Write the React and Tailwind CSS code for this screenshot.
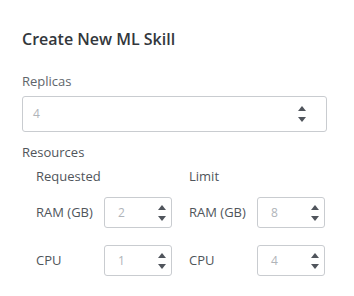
function Spinner() {
  return (
    <div className="flex flex-col items-center gap-[6px]">
      <svg width="8" height="5" viewBox="0 0 8 5">
        <path d="M4 0 L8 5 L0 5 Z" fill="#50555c" />
      </svg>
      <svg width="8" height="5" viewBox="0 0 8 5">
        <path d="M0 0 L8 0 L4 5 Z" fill="#50555c" />
      </svg>
    </div>
  );
}

function NumberBox({ value, className }) {
  return (
    <div
      className={`flex items-center justify-between rounded-[3px] border border-[#c9ccd0] bg-white ${className}`}
    >
      <span className="text-[12px] text-[#b0b4b9]">{value}</span>
      <Spinner />
    </div>
  );
}

function Field({ label, value }) {
  return (
    <div className="flex items-center">
      <span className="w-[68px] text-[13px] text-[#50555b]">{label}</span>
      <NumberBox value={value} className="h-[31px] w-[68px] pl-[13px] pr-[5px]" />
    </div>
  );
}

export default function App() {
  return (
    <div
      className="h-[296px] w-[354px] bg-white pl-[22px] pt-[29px]"
      style={{ fontFamily: '"Open Sans", "Noto Sans", sans-serif' }}
    >
      <h1 className="text-[16px] font-semibold leading-[20px] text-[#33373c]">
        Create New ML Skill
      </h1>
      <div className="mt-[23px] text-[13px] leading-[18px] text-[#60656b]">Replicas</div>
      <NumberBox value="4" className="mt-[6px] h-[36px] w-[305px] pl-[10px] pr-[20px]" />
      <div className="mt-[11px] text-[13px] leading-[18px] text-[#50555b]">Resources</div>
      <div className="ml-[14px] mt-[6px] flex gap-[17px]">
        <div className="flex flex-col">
          <div className="text-[13px] leading-[18px] text-[#50555b]">Requested</div>
          <div className="mt-[12px] flex flex-col gap-[17px]">
            <Field label="RAM (GB)" value="2" />
            <Field label="CPU" value="1" />
          </div>
        </div>
        <div className="flex flex-col">
          <div className="text-[13px] leading-[18px] text-[#50555b]">Limit</div>
          <div className="mt-[12px] flex flex-col gap-[17px]">
            <Field label="RAM (GB)" value="8" />
            <Field label="CPU" value="4" />
          </div>
        </div>
      </div>
    </div>
  );
}
